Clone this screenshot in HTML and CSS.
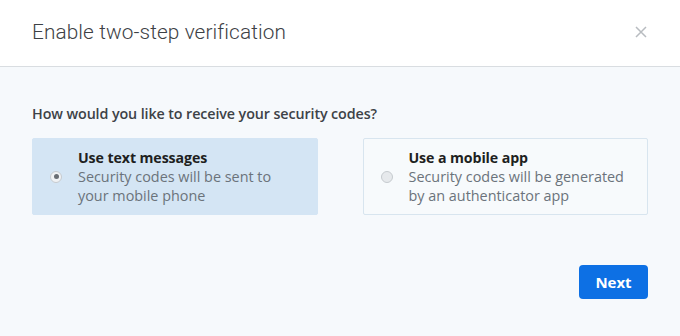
FILE: index.html
```html
<!DOCTYPE html>
<html>
<head>
<meta charset="utf-8">
<link rel="stylesheet" href="styles.css">
</head>
<body>
<div class="modal">
  <header class="head">
    <h1 class="title">Enable two-step verification</h1>
    <button class="close" aria-label="Close">
      <svg width="12" height="12" viewBox="0 0 12 12"><path d="M1 1L11 11M11 1L1 11" stroke="#b8bcc0" stroke-width="1.5" fill="none"/></svg>
    </button>
  </header>
  <main class="body">
    <p class="question">How would you like to receive your security codes?</p>
    <div class="options">
      <label class="option selected">
        <span class="radio checked"></span>
        <span class="text">
          <span class="opt-title">Use text messages</span>
          <span class="opt-desc">Security codes will be sent to<br>your mobile phone</span>
        </span>
      </label>
      <label class="option">
        <span class="radio"></span>
        <span class="text">
          <span class="opt-title">Use a mobile app</span>
          <span class="opt-desc">Security codes will be generated<br>by an authenticator app</span>
        </span>
      </label>
    </div>
    <div class="actions">
      <button class="next">Next</button>
    </div>
  </main>
</div>
</body>
</html>
```

FILE: styles.css
```css
html, body { margin: 0; padding: 0; }
body {
  width: 680px;
  height: 336px;
  background: #f6f9fc;
  font-family: "Open Sans", "Liberation Sans", sans-serif;
  overflow: hidden;
}
.modal { display: flex; flex-direction: column; height: 336px; }
.head {
  height: 67px;
  box-sizing: border-box;
  background: #fff;
  border-bottom: 1px solid #d9dde1;
  display: flex;
  align-items: center;
  justify-content: space-between;
  padding: 0 32px 2px 32px;
}
.title {
  margin: 0;
  font-family: "Roboto", "Liberation Sans", sans-serif;
  font-weight: 300;
  font-size: 20.8px;
  color: #3d4145;
  letter-spacing: 0.1px;
}
.close {
  border: 0;
  background: none;
  padding: 0;
  width: 12px;
  height: 12px;
  margin-right: 1px;
  display: flex;
}
.body { padding: 37px 32px 0 32px; }
.question {
  margin: 0 0 15px 0;
  font-size: 14.3px;
  font-weight: 600;
  color: #3d4247;
  letter-spacing: -0.1px;
}
.options { display: flex; gap: 45px; }
.option {
  box-sizing: border-box;
  width: 286px;
  height: 77px;
  display: flex;
  align-items: center;
  padding: 0 0 0 17px;
  border: 1px solid #d8e5ef;
  border-radius: 2px;
  background: #f7fafc;
}
.option.selected { background: #d4e5f4; border-color: #d4e5f4; }
.radio {
  width: 10px;
  height: 10px;
  border-radius: 50%;
  background: #e6e9ec;
  border: 1px solid #c6cbcf;
  margin-right: 16px;
  flex: none;
  display: flex;
  align-items: center;
  justify-content: center;
}
.radio.checked { background: #f0f2f4; }
.radio.checked::after {
  content: "";
  width: 5px;
  height: 5px;
  border-radius: 50%;
  background: #6a6f74;
}
.text { display: flex; flex-direction: column; white-space: nowrap; }
.opt-title {
  font-size: 14.2px;
  font-weight: 700;
  color: #1e1f21;
  line-height: 19px;
  letter-spacing: -0.1px;
}
.opt-desc {
  font-size: 14.4px;
  color: #6b737b;
  line-height: 19px;
}
.actions { display: flex; justify-content: flex-end; margin-top: 50px; }
.next {
  width: 69px;
  height: 34px;
  border: 0;
  border-radius: 4px;
  background: #0d70e4;
  color: #fff;
  font-family: "Open Sans", "Liberation Sans", sans-serif;
  font-weight: 700;
  font-size: 15px;
}
```
